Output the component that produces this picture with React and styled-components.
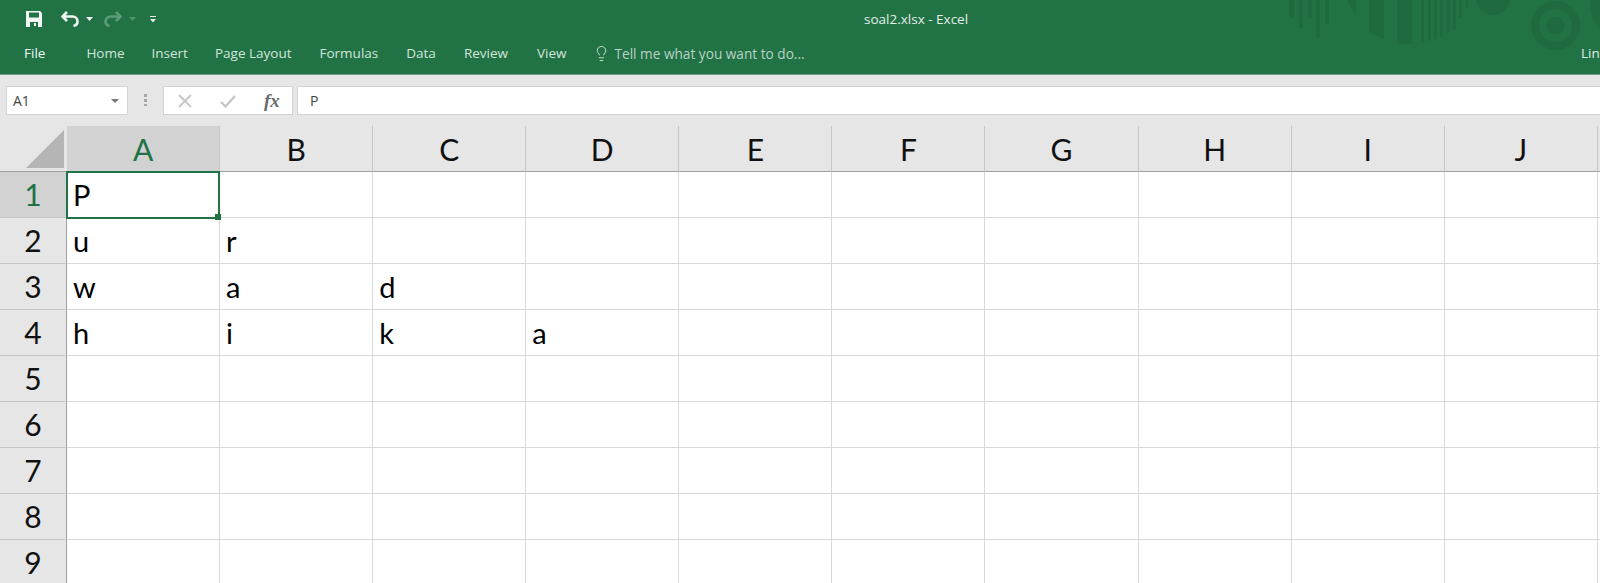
import styled, { createGlobalStyle } from 'styled-components'
import { Lightbulb } from 'lucide-react'

const GlobalStyle = createGlobalStyle`
  html, body {
    margin: 0;
    padding: 0;
    height: 583px;
    overflow: hidden;
    background: #fff;
    font-family: "Open Sans", "Noto Sans", sans-serif;
  }
`

const Page = styled.div`
  width: 1600px;
  height: 583px;
  overflow: hidden;
  display: flex;
  flex-direction: column;
`

const Ribbon = styled.header`
  position: relative;
  flex: none;
  height: 74px;
  background: #217346;
  border-bottom: 1px solid #6f9f84;
  overflow: hidden;
`

const Art = styled.svg`
  position: absolute;
  top: 0;
  left: 1260px;
  width: 340px;
  height: 74px;
  fill: #1f6a41;
`

const TitleRow = styled.div`
  position: relative;
  display: flex;
  align-items: center;
  height: 38px;
  padding-left: 26px;
`

const Quick = styled.div`
  display: flex;
  align-items: center;
  width: 838px;
  flex: none;
`

const Title = styled.div`
  font-size: 13.5px;
  color: #e4eee8;
`

const Tabs = styled.nav`
  position: relative;
  display: flex;
  align-items: center;
  height: 30px;
  padding-left: 24px;
  font-size: 13.5px;
`

const Tab = styled.span`
  margin-left: ${p => p.$gap}px;
  color: ${p => (p.$bright ? '#f2f7f4' : '#d3e3da')};
`

const Tell = styled.span`
  display: flex;
  align-items: center;
  gap: 4px;
  margin-left: 27px;
  font-size: 13.65px;
  color: #b9d2c4;
  svg { color: #e4eee8; }
`

const User = styled.span`
  margin-left: auto;
  width: 19px;
  white-space: nowrap;
  color: #e4eee8;
`

const FormulaBar = styled.div`
  flex: none;
  display: flex;
  align-items: flex-start;
  height: 51px;
  padding-top: 11px;
  box-sizing: border-box;
  background: #e6e6e6;
`

const Box = styled.div`
  display: flex;
  align-items: center;
  box-sizing: border-box;
  height: 29px;
  background: #fff;
  border: 1px solid #d4d4d4;
  font-size: 14px;
  color: #444;
`

const NameBox = styled(Box)`
  width: 122px;
  margin-left: 6px;
  padding: 0 8px 0 6px;
  justify-content: space-between;
`

const Caret = styled.i`
  width: 0;
  height: 0;
  border-left: 4px solid transparent;
  border-right: 4px solid transparent;
  border-top: 4px solid #777;
`

const Grip = styled.div`
  width: 3px;
  height: 12px;
  margin: 8px 16px 0 16px;
  background: repeating-linear-gradient(#a8a8a8 0 3px, transparent 3px 5px);
`

const FxBox = styled(Box)`
  width: 130px;
  padding-left: 13px;
`

const Fx = styled.span`
  font: italic bold 19px "Liberation Serif", serif;
  color: #6b6b6b;
  margin-left: 28px;
`

const InputBox = styled(Box)`
  flex: 1;
  margin-left: 4px;
  padding-left: 12px;
  border-right: none;
`

const Sheet = styled.div`
  flex: none;
  display: grid;
  grid-template-columns: 67px repeat(11, 153.08px);
  grid-template-rows: repeat(10, 46px);
  font-family: Lato, "Liberation Sans", sans-serif;
  background: #fff;
`

const Corner = styled.div`
  display: flex;
  align-items: flex-end;
  justify-content: flex-end;
  padding: 0 3px 3px 0;
  background: #e6e6e6;
  border-bottom: 1px solid #a0a0a0;
  box-sizing: border-box;
`

const ColHead = styled.div`
  display: flex;
  align-items: center;
  justify-content: center;
  box-sizing: border-box;
  font-size: 30px;
  padding-top: 1px;
  color: ${p => (p.$active ? '#217346' : '#111')};
  background: ${p => (p.$active ? '#d2d2d2' : '#e6e6e6')};
  border-right: 1px solid #c6c6c6;
  border-bottom: 1px solid #a0a0a0;
`

const RowHead = styled.div`
  display: flex;
  align-items: center;
  justify-content: center;
  box-sizing: border-box;
  font-size: 30px;
  padding-bottom: 2px;
  color: ${p => (p.$active ? '#217346' : '#111')};
  background: ${p => (p.$active ? '#d2d2d2' : '#e6e6e6')};
  border-right: 1px solid #a0a0a0;
  border-bottom: 1px solid #c6c6c6;
`

const Cell = styled.div`
  position: relative;
  display: flex;
  align-items: center;
  box-sizing: border-box;
  padding: 0 0 0 6px;
  font-size: 29px;
  color: #000;
  border-right: 1px solid #d9d9d9;
  border-bottom: 1px solid #d9d9d9;
`

const Selection = styled.span`
  position: absolute;
  z-index: 2;
  top: -1px;
  left: -1px;
  right: -1px;
  bottom: -2px;
  border: 2px solid #217346;

  &::after {
    content: '';
    position: absolute;
    right: -3px;
    bottom: -3px;
    width: 6px;
    height: 6px;
    background: #217346;
  }
`

// the last column only shows its first pixels, so it has no visible letter
const columns = ['A', 'B', 'C', 'D', 'E', 'F', 'G', 'H', 'I', 'J', '']
const rows = [1, 2, 3, 4, 5, 6, 7, 8, 9]
const data = [['P'], ['u', 'r'], ['w', 'a', 'd'], ['h', 'i', 'k', 'a']]

const tabs = [
  ['Home', 41],
  ['Insert', 27],
  ['Page Layout', 27],
  ['Formulas', 28],
  ['Data', 28],
  ['Review', 28],
  ['View', 29],
]

function RibbonArt() {
  const bars = [
    [1289, 5, 18], [1299, 4, 28], [1308, 4, 18], [1316, 4, 38], [1325, 4, 24],
    [1421, 3, 43], [1428, 3, 41], [1434, 3, 39], [1440, 3, 37], [1447, 3, 33],
    [1453, 3, 30], [1459, 3, 18], [1466, 2, 8],
  ]
  return (
    <Art viewBox="1260 0 340 74">
      {bars.map(([x, w, h]) => <rect key={x} x={x} y="0" width={w} height={h} />)}
      <path d="M1347 0h9v17z" />
      <path d="M1369 0h15v39l-15-7z" />
      <path d="M1397 0h15v44l-15-1z" />
      <circle cx="1493" cy="-2" r="17" />
      <path fillRule="evenodd" d="M1555.5 1a24.5 24.5 0 1 0 0 49a24.5 24.5 0 1 0 0-49zM1555.5 9a16.5 16.5 0 1 1 0 33a16.5 16.5 0 1 1 0-33z" />
      <circle cx="1555.5" cy="25.5" r="9" />
      <circle cx="1627" cy="4" r="37" />
    </Art>
  )
}

function QuickAccess() {
  return (
    <Quick>
      <svg width="16" height="16" viewBox="0 0 16 16">
        <path fill="#f2f7f4" fillRule="evenodd" d="M0 0h14l2 2v14H0zM3 1.5v5h10v-5zM4 11v5h8v-5z" />
        <rect x="8" y="12" width="2" height="3" fill="#f2f7f4" />
      </svg>
      <svg width="19" height="16" viewBox="0 0 19 16" style={{ marginLeft: 19 }} fill="none">
        <path d="M1.5 5.5h10a5 5 0 0 1 5 5c0 2.5-2 4-4 4.5M6 1L1.5 5.5 6 10" stroke="#f2f7f4" strokeWidth="2.6" />
      </svg>
      <svg width="8" height="4" viewBox="0 0 8 4" style={{ marginLeft: 6 }}>
        <path d="M0 0h7L3.5 4z" fill="#f2f7f4" />
      </svg>
      <svg width="19" height="16" viewBox="0 0 19 16" style={{ marginLeft: 9 }} fill="none">
        <path d="M17.5 5.5h-10a5 5 0 0 0-5 5c0 2.5 2 4 4 4.5M13 1l4.5 4.5L13 10" stroke="#5d9a79" strokeWidth="2.6" />
      </svg>
      <svg width="8" height="4" viewBox="0 0 8 4" style={{ marginLeft: 7 }}>
        <path d="M0 0h7L3.5 4z" fill="#4f9270" />
      </svg>
      <svg width="7" height="7" viewBox="0 0 7 7" style={{ marginLeft: 13 }}>
        <path d="M0 0h6v1H0zM0 3h6L3 6.5z" fill="#e4eee8" />
      </svg>
    </Quick>
  )
}

export default function App() {
  return (
    <Page>
      <GlobalStyle />
      <Ribbon>
        <RibbonArt />
        <TitleRow>
          <QuickAccess />
          <Title>soal2.xlsx - Excel</Title>
        </TitleRow>
        <Tabs>
          <Tab $bright>File</Tab>
          {tabs.map(([name, gap]) => <Tab key={name} $gap={gap}>{name}</Tab>)}
          <Tell>
            <Lightbulb size={17} strokeWidth={1.2} />
            Tell me what you want to do...
          </Tell>
          <User>Lint</User>
        </Tabs>
      </Ribbon>

      <FormulaBar>
        <NameBox>A1<Caret /></NameBox>
        <Grip />
        <FxBox>
          <svg width="16" height="14" viewBox="0 0 16 14">
            <path d="M2 1l12 12M14 1L2 13" stroke="#c6c6c6" strokeWidth="1.8" fill="none" />
          </svg>
          <svg width="16" height="14" viewBox="0 0 16 14" style={{ marginLeft: 27 }}>
            <path d="M1 8l4.5 4.5L15 2" stroke="#c6c6c6" strokeWidth="2.4" fill="none" />
          </svg>
          <Fx>fx</Fx>
        </FxBox>
        <InputBox>P</InputBox>
      </FormulaBar>

      <Sheet>
        <Corner>
          <svg width="38" height="38" viewBox="0 0 38 38">
            <path d="M38 0v38H0z" fill="#b5b5b5" />
          </svg>
        </Corner>
        {columns.map((c, i) => <ColHead key={i} $active={i === 0}>{c}</ColHead>)}
        {rows.map((r, ri) => [
          <RowHead key={`h${r}`} $active={ri === 0}>{r}</RowHead>,
          ...columns.map((c, ci) => (
            <Cell key={`${ci}-${r}`}>
              {data[ri]?.[ci]}
              {ri === 0 && ci === 0 && <Selection />}
            </Cell>
          )),
        ])}
      </Sheet>
    </Page>
  )
}
